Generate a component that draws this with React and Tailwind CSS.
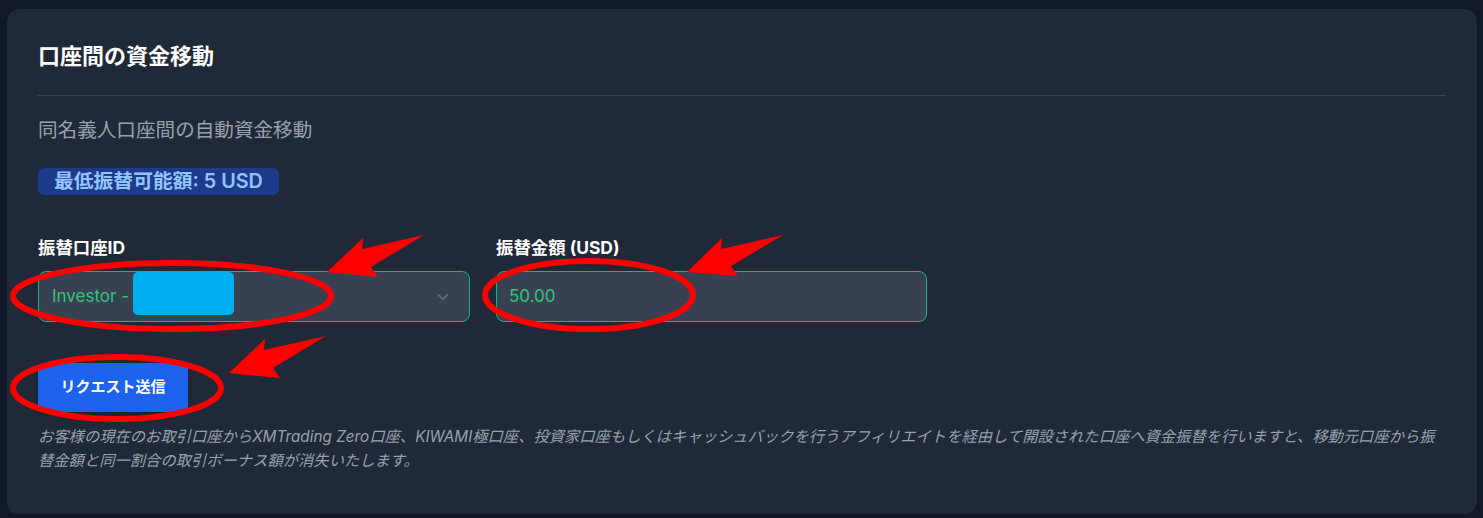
import { ChevronDown } from 'lucide-react'

export default function App() {
  return (
    <div className="relative min-h-[518px] bg-[#111827] pt-[9px] pl-[7px] pr-[6px] pb-[4px] font-['Inter','Noto_Sans_CJK_JP',sans-serif]">
      <div className="rounded-xl bg-[#1f2937] px-[31px] pt-[32px] pb-[41px]">
        <h2 className="border-b border-[#374151] pb-[24px] text-[22px] leading-[30px] font-bold text-white">
          口座間の資金移動
        </h2>

        <p className="mt-[20px] text-[19.6px] leading-[28px] text-gray-400">同名義人口座間の自動資金移動</p>

        <div className="mt-[24px] flex">
          <span className="rounded-md bg-[#1e3a8a] px-[16px] text-[19.8px] leading-[27px] font-semibold text-[#93c5fd]">
            最低振替可能額: 5 USD
          </span>
        </div>

        {/* Form fields */}
        <div className="mt-[41px] flex gap-[26px]">
          <div className="w-[432px]">
            <label className="block text-[17.4px] leading-[24px] font-bold text-white">振替口座ID</label>
            <div className="mt-[11px] flex h-[51px] items-center justify-between rounded-lg border border-[#10b981] bg-[#384152] pl-[13px] pr-[17px]">
              <div className="flex items-center text-[17px] text-[#34c47c]">
                <span>Investor -</span>
                <span className="ml-[4px] h-[43px] w-[101px] -translate-y-[3px] rounded-[5px] bg-[#00b0f0]" />
              </div>
              <ChevronDown className="h-[18px] w-[18px] text-gray-500" strokeWidth={2} />
            </div>
          </div>
          <div className="w-[431px]">
            <label className="block text-[17.4px] leading-[24px] font-bold text-white">振替金額 (USD)</label>
            <div className="mt-[11px] flex h-[51px] items-center rounded-lg border border-[#10b981] bg-[#384152] px-[12px]">
              <span className="text-[17px] text-[#34c47c]">50.00</span>
            </div>
          </div>
        </div>

        <button className="mt-[41px] h-[49px] w-[150px] rounded-md bg-[#1d63ed] text-[15px] font-bold text-white shadow-md">
          リクエスト送信
        </button>

        <p className="mt-[13px] text-[15.3px] leading-[24px] text-gray-400 italic">
          お客様の現在のお取引口座からXMTrading Zero口座、KIWAMI極口座、投資家口座もしくはキャッシュバックを行うアフィリエイトを経由して開設された口座へ資金振替を行いますと、移動元口座から振
          <br />
          替金額と同一割合の取引ボーナス額が消失いたします。
        </p>
      </div>

      {/* red annotation marks drawn over the screenshot */}
      <svg className="pointer-events-none absolute inset-0" width="1483" height="518" viewBox="0 0 1483 518">
        <g fill="none" stroke="#ff0000" strokeWidth="6">
          <ellipse cx="172" cy="296" rx="159" ry="33" />
          <ellipse cx="589" cy="295" rx="104" ry="34" />
          <ellipse cx="117" cy="388" rx="104" ry="31" />
        </g>
        <g fill="#ff0000">
          <polygon points="327,272 363,238 362,249 424,235 371,267 378,277" />
          <polygon points="687,272 722,238 721,249 783,235 731,266 738,276" />
          <polygon points="229,373 265,339 264,350 326,336 273,368 280,378" />
        </g>
      </svg>
    </div>
  )
}
